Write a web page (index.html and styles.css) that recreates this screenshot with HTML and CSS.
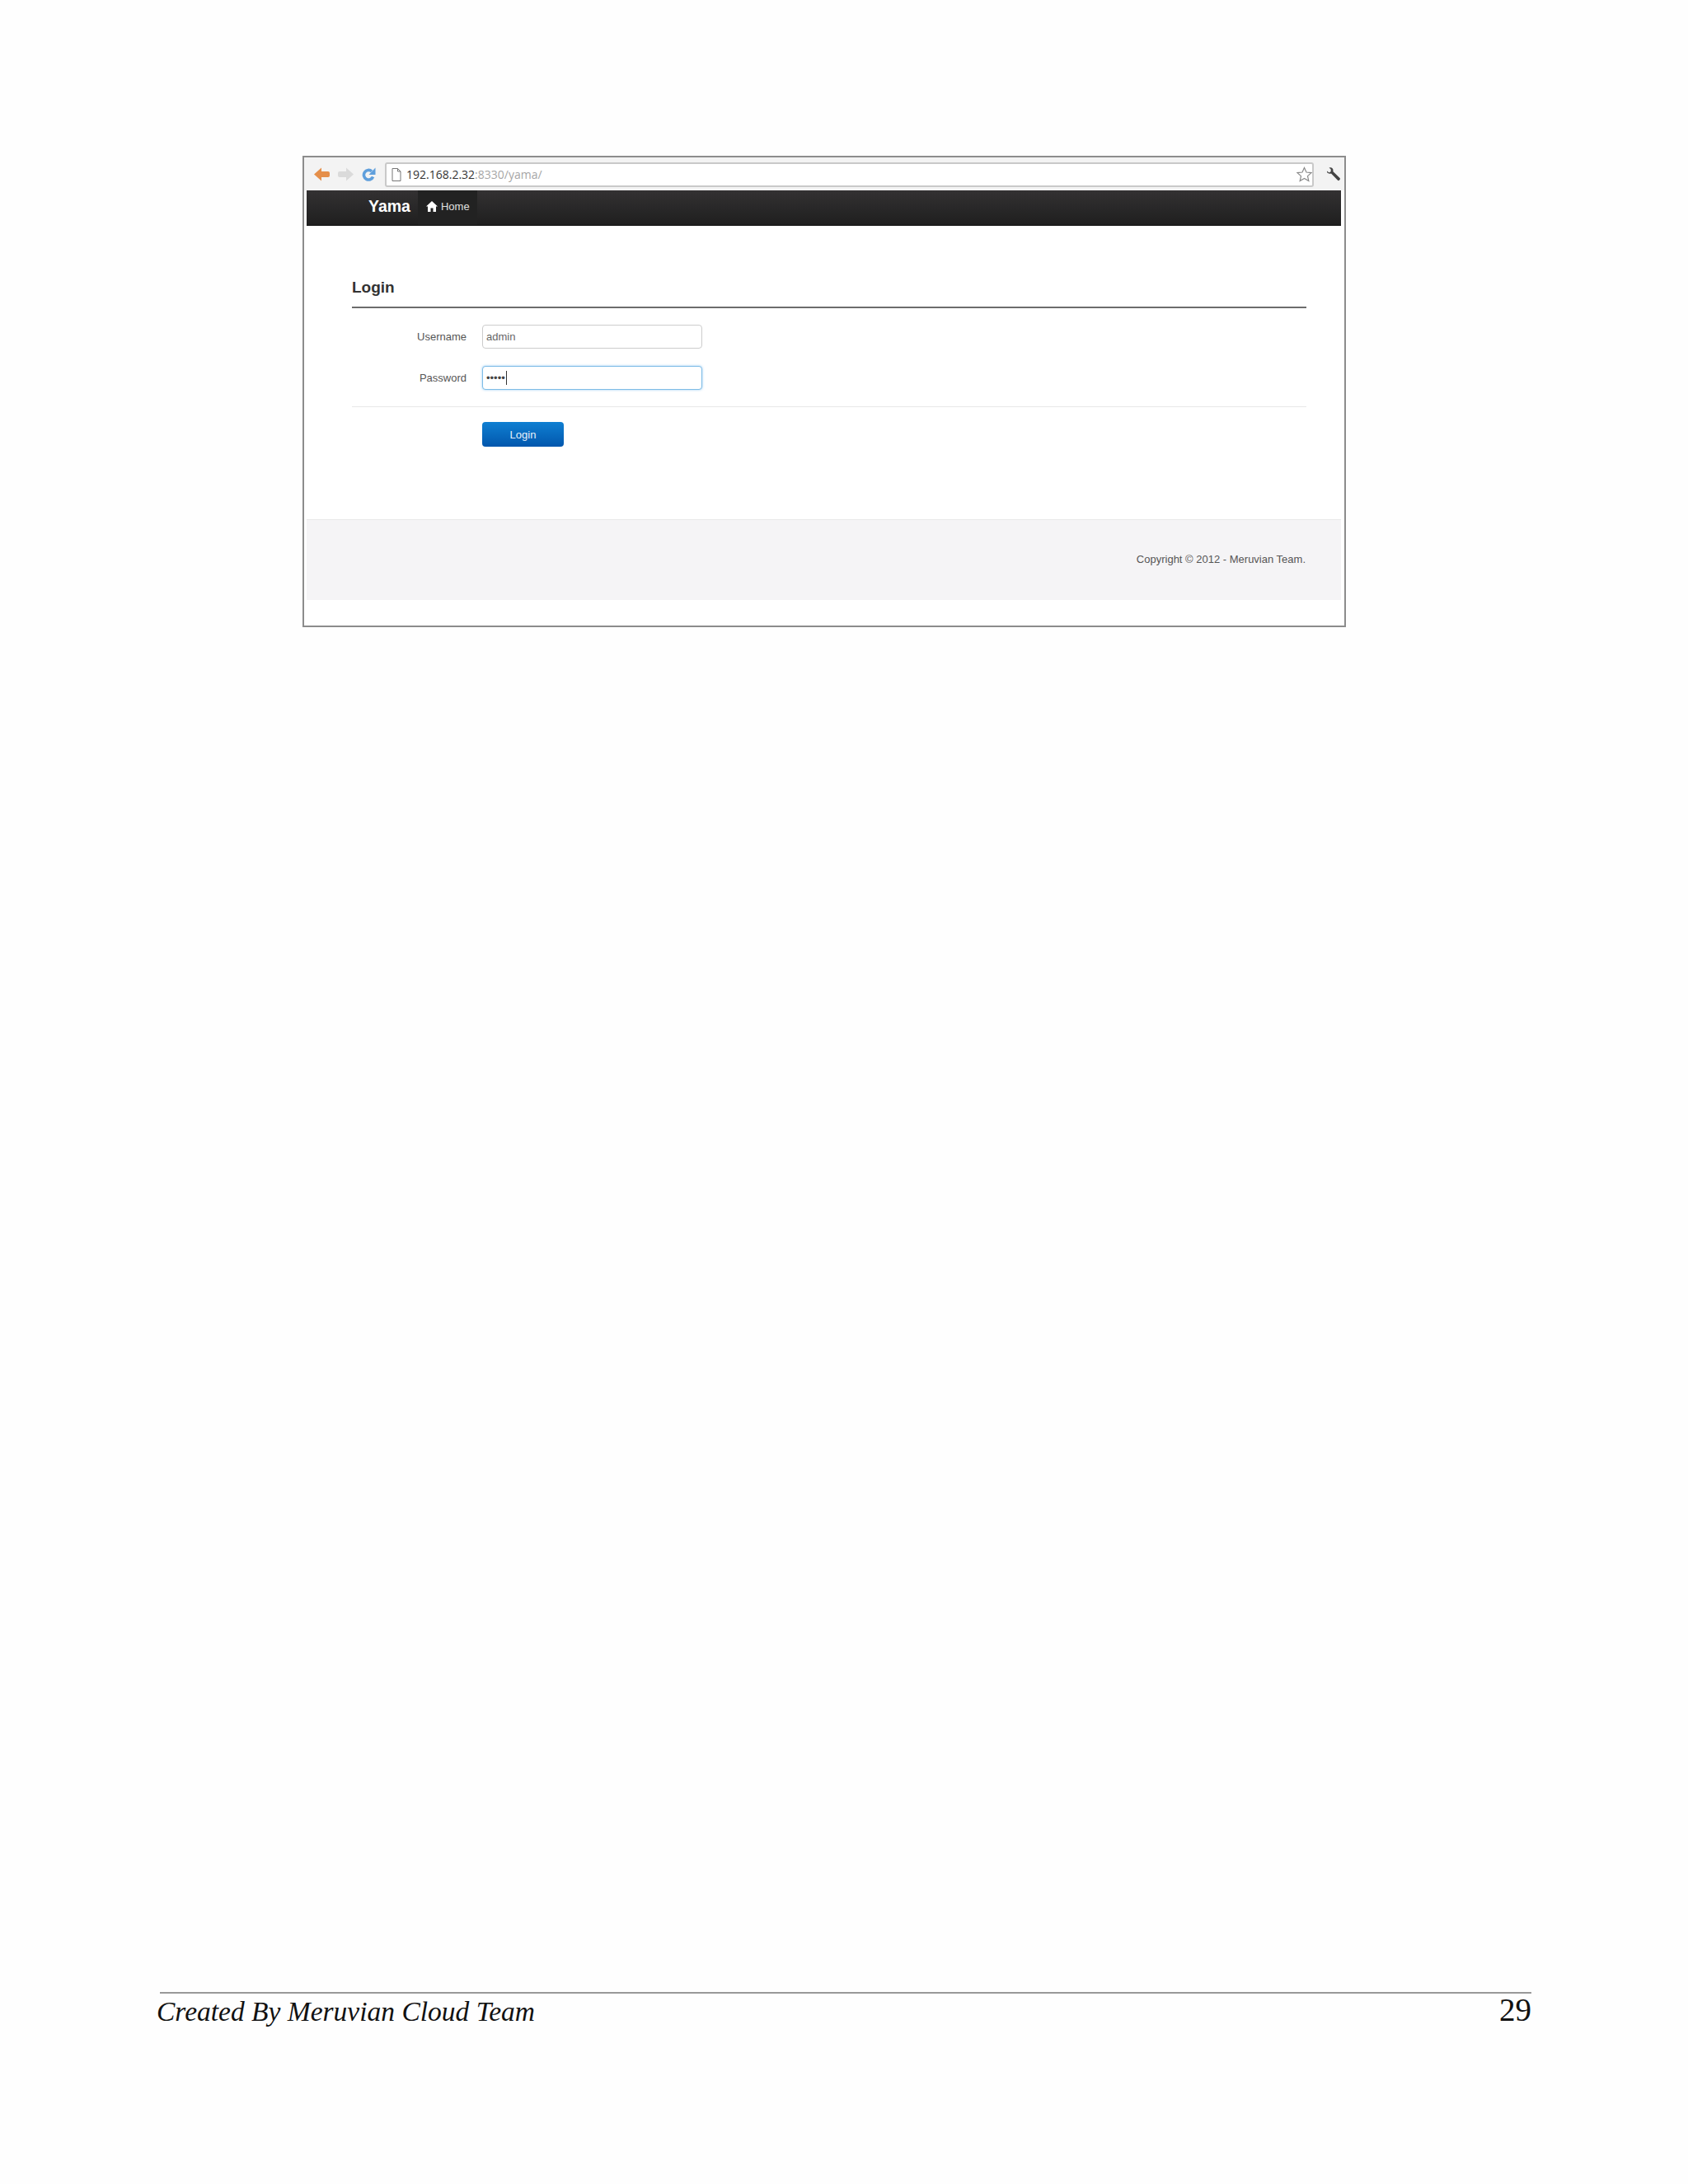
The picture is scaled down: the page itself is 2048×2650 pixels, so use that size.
FILE: index.html
```html
<!DOCTYPE html>
<html lang="en">
  <head>
    <meta charset="UTF-8" />
    <title>Yama Login</title>
    <link rel="stylesheet" href="styles.css">
  </head>
  <body>
    <div class="page">
      <div class="shot">
        <div class="browser-bar">
          <svg class="nav-icon" width="19" height="17" viewBox="0 0 19 17">
            <path d="M0 8.500 9 .5V5h8a2 2 0 0 1 2 2v3a2 2 0 0 1-2 2H9v4.500z" fill="#e58f4a" />
          </svg>
          <svg class="nav-icon" width="19" height="17" viewBox="0 0 19 17">
            <path d="M19 8.500 10 .5V5H2a2 2 0 0 0-2 2v3a2 2 0 0 0 2 2h8v4.500z" fill="#dadada" />
          </svg>
          <svg class="nav-icon" width="17" height="17" viewBox="0 0 17 17">
            <path d="M13.600 11.500A5.800 5.800 0 1 1 12 4.800" fill="none" stroke="#5f9fdc" stroke-width="3.600" />
            <path d="M16.500 .5V9H8.500z" fill="#5f9fdc" />
          </svg>
          <div class="url-box">
            <svg width="12" height="16" viewBox="0 0 12 16">
              <path d="M1 .5h6.500L11 4v11.500H1zM7.500 .5V4H11" fill="#fff" stroke="#777" />
            </svg>
            <span class="url-text">192.168.2.32<span class="url-rest">:8330/yama/</span></span>
            <svg class="star" width="19" height="19" viewBox="0 0 19 19">
              <path d="M9.500 1.500 12 7l6 .6-4.500 4 1.300 5.900-5.300-3-5.300 3 1.300-5.900-4.500-4L7 7z" fill="#fff" stroke="#8a8a8a" stroke-width="1.200" />
            </svg>
          </div>
          <svg class="wrench" width="17" height="17" viewBox="0 0 17 17">
            <path d="M1 4.500 3.500 6.500 5.800 5 5.500 2 3.500 .8C6-.4 8.500 1 8.500 3.800c0 .5-.1 1-.2 1.300l8 7.700a1.500 1.500 0 0 1-.1 2.500 1.500 1.500 0 0 1-2.400.1L6 7.500C3.500 8.300 .5 7 1 4.500z" fill="#444" />
          </svg>
        </div>

        <div class="navbar">
          <span class="brand">Yama</span>
          <a class="nav-home">
            <svg width="14" height="13" viewBox="0 0 14 13">
              <path d="M7 0 14 6.500H12V13H8.500V8.500H5.500V13H2V6.500H0z" fill="#fff" />
            </svg>
            Home
          </a>
        </div>

        <div class="content">
          <h2 class="legend">Login</h2>
          <div class="form-rows">
            <label class="form-label">Username</label>
            <div class="text-input">admin</div>
            <label class="form-label">Password</label>
            <div class="text-input focused">•••••<span class="caret"></span></div>
          </div>
          <div class="form-actions">
            <button class="btn-login">Login</button>
          </div>
        </div>

        <div class="shot-footer">Copyright © 2012 - Meruvian Team.</div>
      </div>

      <div class="doc-footer">
        <div class="doc-rule"></div>
        <div class="doc-line">
          <span class="doc-credit">Created By Meruvian Cloud Team</span>
          <span class="doc-page">29</span>
        </div>
      </div>
    </div>
  </body>
</html>
```

FILE: styles.css
```css
* {
  margin: 0;
  padding: 0;
  box-sizing: border-box;
}

body {
  background-color: #fefefe;
  font-family: "Liberation Sans", Arial, sans-serif;
}

.page {
  height: 2650px;
  display: flex;
  flex-direction: column;
  padding-top: 189px;
  overflow: hidden;
}

/* screenshot pasted in the document */
.shot {
  width: 1266px;
  height: 572px;
  margin-left: 367px;
  border: 2px solid #8c8c8c;
  padding: 0 4px 0 3px;
  background-color: #fff;
  display: flex;
  flex-direction: column;
}

.browser-bar {
  height: 40px;
  flex: none;
  background-color: #f3f3f3;
  margin: 0 -4px 0 -3px;
  padding: 0 5px 0 12px;
  display: flex;
  align-items: center;
}

.nav-icon {
  margin-right: 10px;
  flex: none;
}

.url-box {
  width: 1127px;
  height: 30px;
  flex: none;
  margin-top: 1px;
  margin-left: 1px;
  background-color: #fff;
  border: 2px solid #c9c9c9;
  border-radius: 3px;
  display: flex;
  align-items: center;
  padding-left: 6px;
}

.url-text {
  margin-left: 6px;
  font-family: "Open Sans", sans-serif;
  font-size: 14px;
  color: #333;
}

.url-rest {
  color: #a6a6a6;
}

.star {
  margin-left: auto;
}

.wrench {
  margin-left: 15px;
  flex: none;
}

.navbar {
  height: 43px;
  flex: none;
  background: linear-gradient(#333132, #1f1f1f);
  border-bottom: 1px solid #111;
  display: flex;
  align-items: center;
  padding-left: 75px;
}

.brand {
  color: #fff;
  font-size: 19.5px;
  font-weight: bold;
  margin-bottom: 3px;
}

.nav-home {
  margin-left: 9px;
  height: 42px;
  width: 72px;
  background-color: #222;
  color: #e0e0e0;
  font-size: 13px;
  display: flex;
  align-items: center;
  gap: 4px;
  padding: 0 0 3px 10px;
}

.content {
  flex: 1;
  padding: 0 42px 0 55px;
}

.legend {
  margin-top: 57px;
  height: 43px;
  font-size: 19px;
  line-height: 36px;
  color: #333;
  border-bottom: 2px solid #6c6c6c;
}

.form-rows {
  margin-top: 20px;
  display: grid;
  grid-template-columns: 139px 267px;
  column-gap: 19px;
  row-gap: 21px;
  align-items: center;
}

.form-label {
  font-size: 13px;
  color: #555;
  text-align: right;
}

.text-input {
  height: 29px;
  line-height: 27px;
  border: 1px solid #ccc;
  border-radius: 4px;
  padding-left: 4px;
  font-size: 13px;
  color: #666;
  background-color: #fff;
}

.text-input.focused {
  border-color: #7ebce6;
  box-shadow: 0 0 3px rgba(82, 168, 236, 0.6);
  color: #444;
  display: flex;
  align-items: center;
}

.caret {
  width: 1px;
  height: 17px;
  background-color: #333;
  margin-left: 1px;
}

.form-actions {
  margin-top: 20px;
  border-top: 1px solid #e8e8e8;
  padding: 18px 0 0 158px;
}

.btn-login {
  width: 99px;
  height: 30px;
  border: 0;
  border-radius: 4px;
  background: linear-gradient(#0f7fd2, #0257ad);
  color: #e8f2fb;
  font-family: "Liberation Sans", Arial, sans-serif;
  font-size: 13px;
}

.shot-footer {
  height: 98px;
  flex: none;
  margin-bottom: 31px;
  background-color: #f5f4f6;
  border-top: 1px solid #e8e8e8;
  display: flex;
  align-items: center;
  justify-content: flex-end;
  padding: 0 43px 2px 0;
  font-size: 13px;
  color: #555;
}

/* document footer */
.doc-footer {
  margin-top: auto;
  margin-bottom: 189px;
  padding-left: 190px;
  padding-right: 190px;
}

.doc-rule {
  height: 2px;
  margin-left: 4px;
  background-color: #999;
}

.doc-line {
  height: 42px;
  display: flex;
  justify-content: space-between;
  align-items: baseline;
  font-family: "Liberation Serif", "Times New Roman", serif;
  line-height: 1;
  color: #111;
}

.doc-credit {
  font-size: 33.500px;
  font-style: italic;
}

.doc-page {
  font-size: 39px;
}
```
